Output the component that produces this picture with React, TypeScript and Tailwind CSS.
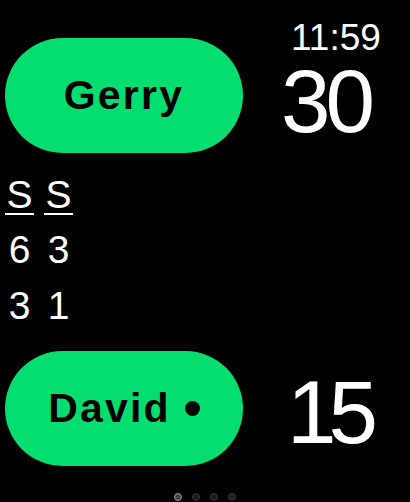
const sans = { fontFamily: '"Liberation Sans", Arial, sans-serif' };

const scores = [
  ['6', '3'],
  ['3', '1'],
];

function PlayerPill({ name, serving }: { name: string; serving?: boolean }) {
  return (
    <div className="ml-[5px] w-[238px] h-[115px] shrink-0 rounded-full bg-[#04de71] flex items-center justify-center">
      <span className="text-[41px] leading-none font-bold text-black tracking-[2.2px]">{name}</span>
      {serving && <span className="ml-[14px] w-[15px] h-[15px] rounded-full bg-black" />}
    </div>
  );
}

export default function App() {
  return (
    <div className="w-[410px] h-[502px] bg-black text-white overflow-hidden" style={sans}>
      {/* Gerry + clock */}
      <div className="flex items-start pt-[22px]">
        <div className="mt-[16px]">
          <PlayerPill name="Gerry" />
        </div>
        <div className="ml-[38px] flex flex-col">
          <div className="ml-[10px] text-[37px] leading-[32px] font-medium">11:59</div>
          <div className="mt-[7px] text-[89px] leading-[80px] tracking-[-5px]">30</div>
        </div>
      </div>

      {/* Set scores */}
      <div className="ml-[5px] mt-[24px] grid grid-cols-[29px_29px] gap-x-[10px] text-[39px]">
        <div className="text-center leading-[36px] border-b-2 border-white">S</div>
        <div className="text-center leading-[36px] border-b-2 border-white">S</div>
        {scores.map(([a, b], i) => (
          <div key={i} className="contents">
            <div className={`text-center leading-[56px] ${i === 0 ? 'mt-[7px]' : ''}`}>{a}</div>
            <div className={`text-center leading-[56px] ${i === 0 ? 'mt-[7px]' : ''}`}>{b}</div>
          </div>
        ))}
      </div>

      {/* David */}
      <div className="flex items-start mt-[17px]">
        <PlayerPill name="David" serving />
        <div className="ml-[44px] mt-[17px] text-[89px] leading-[89px] tracking-[-8px]">15</div>
      </div>

      {/* Page indicator */}
      <div className="flex justify-center gap-[10px] mt-[27px]">
        <span className="w-[8px] h-[8px] rounded-full bg-[#444] border-[1.5px] border-[#999]" />
        <span className="w-[8px] h-[8px] rounded-full bg-[#1c1c1c] border-[1.5px] border-[#3a3a3a]" />
        <span className="w-[8px] h-[8px] rounded-full bg-[#1c1c1c] border-[1.5px] border-[#3a3a3a]" />
        <span className="w-[8px] h-[8px] rounded-full bg-[#1c1c1c] border-[1.5px] border-[#3a3a3a]" />
      </div>
    </div>
  );
}
